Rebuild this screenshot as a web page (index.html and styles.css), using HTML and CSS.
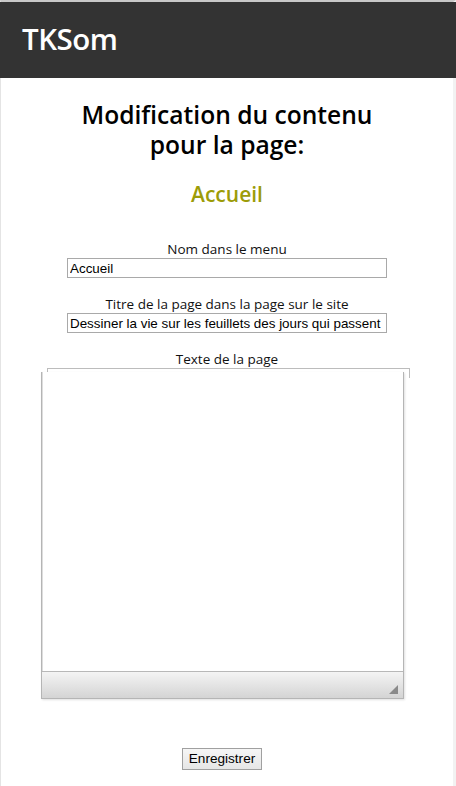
FILE: index.html
```html
<!DOCTYPE html>
<html lang="fr">
<head>
<meta charset="utf-8">
<title>TKSom</title>
<link rel="stylesheet" href="styles.css">
</head>
<body>
<div class="page">
  <header class="topbar"><span class="brand">TKSom</span></header>
  <main class="content">
    <h1 class="title">Modification du contenu<br>pour la page:</h1>
    <h2 class="pagename">Accueil</h2>
    <form class="form">
      <label class="field">
        <span class="label">Nom dans le menu</span>
        <input class="input" type="text" value="Accueil">
      </label>
      <label class="field">
        <span class="label">Titre de la page dans la page sur le site</span>
        <input class="input" type="text" value="Dessiner la vie sur les feuillets des jours qui passent">
      </label>
      <div class="field">
        <span class="label">Texte de la page</span>
        <div class="editor-wrap">
          <div class="editor-back"></div>
          <div class="editor">
            <div class="editor-body"></div>
            <div class="editor-status"><span class="grip"></span></div>
          </div>
        </div>
      </div>
      <div class="actions">
        <button class="btn" type="button">Enregistrer</button>
      </div>
    </form>
  </main>
</div>
</body>
</html>
```
FILE: styles.css
```css
html, body {
  margin: 0;
  padding: 0;
  background: #fff;
}
.page {
  width: 456px;
  height: 786px;
  box-sizing: border-box;
  border-top: 2px solid #c8c8c8;
  border-left: 1px solid #e4e4e4;
  border-right: 3px solid #f2f2f2;
  display: flex;
  flex-direction: column;
}
.topbar {
  background: #333333;
  height: 76px;
  margin-left: -1px;
  margin-right: -3px;
  display: flex;
  align-items: center;
  padding-left: 22px;
}
.brand {
  color: #fff;
  font-family: "Open Sans", "Noto Sans", sans-serif;
  font-weight: 600;
  font-size: 29.5px;
  letter-spacing: -0.5px;
  margin-top: -4px;
}
.content {
  display: flex;
  flex-direction: column;
  align-items: center;
  font-family: "Open Sans", "Noto Sans", sans-serif;
}
.title {
  margin: 22px 0 0;
  font-size: 24.6px;
  font-weight: 600;
  line-height: 30px;
  text-align: center;
  color: #000;
}
.pagename {
  margin: 20px 0 0;
  font-size: 21px;
  font-weight: 600;
  line-height: 28px;
  color: #9c9c08;
}
.form {
  display: flex;
  flex-direction: column;
  align-items: center;
  margin-top: 33px;
  width: 100%;
}
.field {
  display: flex;
  flex-direction: column;
  align-items: center;
  margin-bottom: 18px;
}
.label {
  font-size: 13.5px;
  line-height: 17px;
  color: #111;
}
.input {
  width: 320px;
  height: 20px;
  box-sizing: border-box;
  border: 1px solid #a9a9a9;
  padding: 0 1px 0 2px;
  font-family: "Liberation Sans", Arial, sans-serif;
  font-size: 13.4px;
  color: #000;
  margin: 0;
}
.editor-wrap {
  position: relative;
  width: 369px;
  height: 331px;
  margin-left: -4px;
}
.editor-back {
  position: absolute;
  left: 6px;
  top: 0;
  width: 363px;
  height: 10px;
  border: 1px solid #bcbcbc;
  border-bottom: none;
  box-sizing: border-box;
}
.editor {
  position: absolute;
  left: 0;
  top: 4px;
  width: 363px;
  height: 327px;
  box-sizing: border-box;
  border: 1px solid #b5b5b5;
  border-top: none;
  background: #fff;
  display: flex;
  flex-direction: column;
  box-shadow: 1px 1px 2px rgba(0,0,0,0.12);
}
.editor-body {
  flex: 1;
  border-left: 1px solid #ddd;
}
.editor-status {
  height: 26px;
  border-top: 1px solid #b8b8b8;
  background: linear-gradient(#f4f4f4, #d4d4d4);
  position: relative;
}
.grip {
  position: absolute;
  right: 5px;
  bottom: 4px;
  width: 0;
  height: 0;
  border-left: 9px solid transparent;
  border-bottom: 9px solid #8a8a8a;
}
.actions {
  margin-top: 29px;
  margin-left: -10px;
}
.btn {
  font-family: "Liberation Sans", Arial, sans-serif;
  font-size: 13.6px;
  height: 22px;
  padding: 0 6px;
  border: 1px solid #a0a0a0;
  background: linear-gradient(#f6f6f6, #e6e6e6);
  color: #000;
  border-radius: 0;
}
```
